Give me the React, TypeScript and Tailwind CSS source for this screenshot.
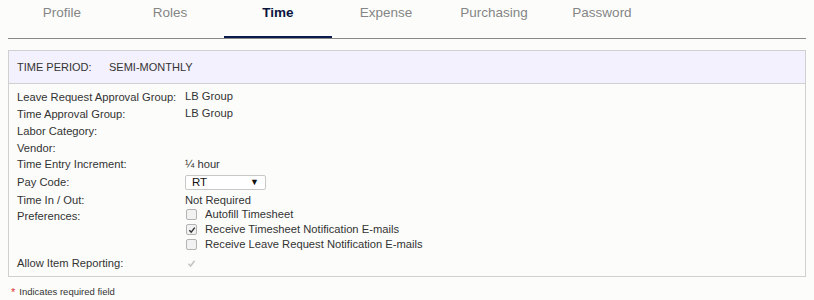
import { useState } from "react";

const tabs = ["Profile", "Roles", "Time", "Expense", "Purchasing", "Password"];

function Check({ checked, disabled }: { checked?: boolean; disabled?: boolean }) {
    if (disabled) {
        return (
            <span className="w-[11px] h-[11px] flex items-center justify-center">
                <svg width="9" height="9" viewBox="0 0 9 9">
                    <path d="M1.5 4.8 L3.6 7 L7.6 1.8" fill="none" stroke="#c4c4c4" strokeWidth="1.6" />
                </svg>
            </span>
        );
    }
    return (
        <span className="w-[11px] h-[11px] rounded-[2px] border border-[#b3b3b3] bg-[#f2f2f2] flex items-center justify-center">
            {checked && (
                <svg width="8" height="8" viewBox="0 0 9 9">
                    <path d="M1.5 4.8 L3.6 7 L7.6 1.8" fill="none" stroke="#333" strokeWidth="1.6" />
                </svg>
            )}
        </span>
    );
}

function Row({ label, h, children }: { label: string; h: string; children?: React.ReactNode }) {
    return (
        <div className={`flex items-center ${h}`}>
            <span className="w-[168px] shrink-0 whitespace-nowrap">{label}</span>
            <div className="flex items-center">{children}</div>
        </div>
    );
}

export default function App() {
    const [active] = useState("Time");
    const prefs = [
        { label: "Autofill Timesheet", checked: false },
        { label: "Receive Timesheet Notification E-mails", checked: true },
        { label: "Receive Leave Request Notification E-mails", checked: false },
    ];

    return (
        <div className="w-[814px] h-[300px] bg-[#fcfdfb] px-2 font-['Liberation_Sans',Arial,sans-serif] text-[#333] text-[11.2px]">
            <div className="flex border-b border-[#888]">
                {tabs.map((t) => (
                    <div
                        key={t}
                        className={
                            t === active
                                ? "w-[108px] h-[38px] pt-[3px] text-center text-[13.5px] font-bold text-[#0b1640] border-b-2 border-[#0b1a4d] mb-[-1px]"
                                : "w-[108px] h-[38px] pt-[3px] text-center text-[13.5px] text-[#858585]"
                        }
                    >
                        {t}
                    </div>
                ))}
            </div>

            <div className="mt-[11px] border border-[#d0d0d0]">
                <div className="h-[33px] bg-[#f3f1fd] border-b border-[#d0d0d0] flex items-center pl-2 text-[11px]">
                    <span className="w-[92px]">TIME PERIOD:</span>
                    <span>SEMI-MONTHLY</span>
                </div>
                <div className="pl-2 pt-[5px] pb-[3px]">
                    <Row label="Leave Request Approval Group:" h="h-[17px]">
                        <span className="-mt-[2px]">LB Group</span>
                    </Row>
                    <Row label="Time Approval Group:" h="h-[17px]">
                        <span className="-mt-[2px]">LB Group</span>
                    </Row>
                    <Row label="Labor Category:" h="h-[17px]" />
                    <Row label="Vendor:" h="h-[17px]" />
                    <Row label="Time Entry Increment:" h="h-[15px]">
                        <span>¼ hour</span>
                    </Row>
                    <Row label="Pay Code:" h="h-[21px]">
                        <div className="w-[81px] h-[15px] border border-[#c8c8c8] rounded-[2px] bg-white flex items-center justify-between px-[6px]">
                            <span className="text-[11.5px] text-[#111]">RT</span>
                            <span className="text-[9px] text-[#111]">▼</span>
                        </div>
                    </Row>
                    <Row label="Time In / Out:" h="h-[14px]">
                        <span>Not Required</span>
                    </Row>
                    <div className="flex">
                        <span className="w-[168px] shrink-0 pt-[1px]">Preferences:</span>
                        <div className="flex flex-col pl-[1px]">
                            {prefs.map((p) => (
                                <label key={p.label} className="flex items-center h-[15px] gap-[8px]">
                                    <Check checked={p.checked} />
                                    <span>{p.label}</span>
                                </label>
                            ))}
                        </div>
                    </div>
                    <div className="flex items-center h-[20px] mt-[1px]">
                        <span className="w-[169px] shrink-0">Allow Item Reporting:</span>
                        <Check disabled checked />
                    </div>
                </div>
            </div>

            <div className="mt-[7px] pl-[3px] text-[9.5px] text-[#333] flex items-center gap-[4px]">
                <span className="text-[#d33] text-[11px]">*</span>
                <span>Indicates required field</span>
            </div>
        </div>
    );
}
